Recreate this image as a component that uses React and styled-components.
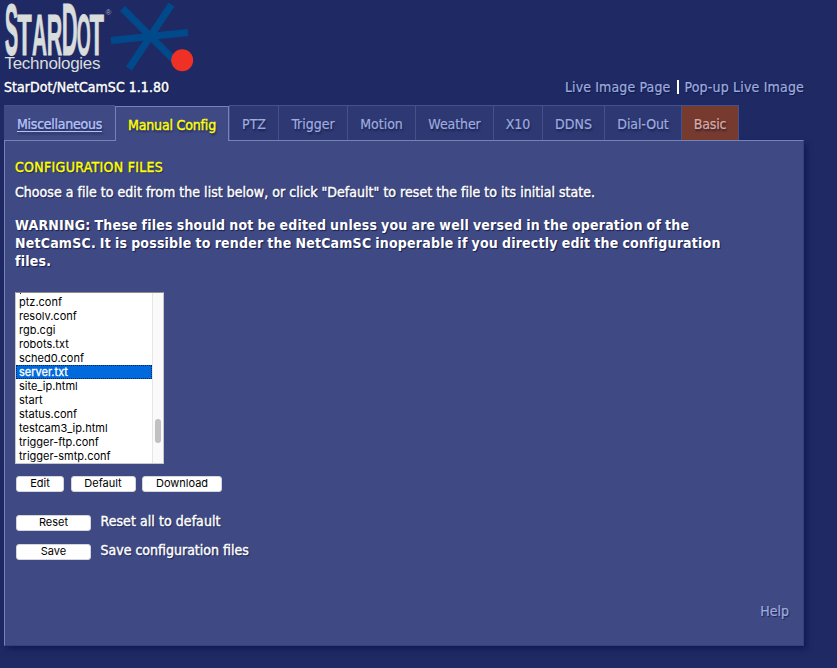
import React from 'react';
import styled, { createGlobalStyle } from 'styled-components';

const Global = createGlobalStyle`
  * { box-sizing: border-box; }
  html, body { margin: 0; background: #1f2a64; }
  body { overflow: hidden; }
`;

const Page = styled.div`
  width: 837px;
  height: 668px;
  padding-left: 4px;
  overflow: hidden;
  background: #1f2a64;
  color: #fff;
  font: 14px/18px "DejaVu Sans Condensed", "DejaVu Sans", sans-serif;
  text-shadow: 1px 1px 1px rgba(10, 16, 60, 0.75);
`;

const Logo = styled.svg`
  display: block;
  width: 200px;
  height: 78px;
  overflow: visible;
  text-shadow: none;
`;

const TitleRow = styled.header`
  display: flex;
  justify-content: space-between;
  width: 800px;
  height: 27px;
`;

const Strong = styled.span`
  white-space: nowrap;
  letter-spacing: ${(p) => p.$spacing || 0}px;
  -webkit-text-stroke: 0.4px #fff;
`;

const Links = styled.nav`
  display: flex;
  gap: 4.5px;
`;

const Link = styled.a`
  color: #9dabdf;
  white-space: nowrap;
  letter-spacing: ${(p) => p.$spacing || 0}px;
  -webkit-text-stroke: 0.2px #9dabdf;
`;

const Divider = styled.span`
  width: 2px;
  height: 14px;
  margin: 2px 1px 0 2px;
  background: #fff;
`;

const Tabs = styled.nav`
  display: flex;
  height: 35px;
`;

const tones = {
  normal: { bg: '#2e3973', color: '#9dabdf', border: '#46518b' },
  hover: { bg: '#3f4a84', color: '#b4c1f5', border: '#46518b' },
  active: { bg: '#3f4a84', color: '#ffff00', border: '#7783b5' },
  basic: { bg: '#763b2e', color: '#dcaaa0', border: '#46518b' },
};

const Tab = styled.a`
  display: flex;
  justify-content: center;
  width: ${(p) => p.$width}px;
  height: 35px;
  margin-top: ${(p) => (p.$tone === 'active' ? 1 : 0)}px;
  padding: 9px 0 0;
  border-top: 1px solid ${(p) => tones[p.$tone].border};
  border-left: ${(p) => (p.$tone === 'hover' ? 0 : 1)}px solid ${(p) => tones[p.$tone].border};
  border-right: ${(p) => (p.$tone === 'active' || p.$tone === 'basic' ? 1 : 0)}px solid ${(p) => tones[p.$tone].border};
  background: ${(p) => tones[p.$tone].bg};
  color: ${(p) => tones[p.$tone].color};
  letter-spacing: ${(p) => p.$spacing || 0}px;
  white-space: nowrap;
  text-shadow: 1px 2px 2px rgba(15, 20, 65, 0.7);
  text-decoration: ${(p) => (p.$tone === 'hover' ? 'underline' : 'none')};
  text-underline-offset: 2px;
  -webkit-text-stroke: ${(p) => (p.$tone === 'active' ? 0.4 : 0.2)}px ${(p) => tones[p.$tone].color};
  z-index: ${(p) => (p.$tone === 'active' ? 1 : 0)};
`;

const Panel = styled.main`
  display: flex;
  flex-direction: column;
  width: 800px;
  height: 506px;
  padding: 17px 10px 0;
  border: 1px solid #35407a;
  border-top-color: #7783b5;
  border-left-color: #7783b5;
  background: #3f4a84;
  box-shadow: 3px 3px 5px #111b54;
`;

const Heading = styled.h1`
  margin: 0;
  color: #ffff00;
  font: inherit;
  letter-spacing: 0.3px;
  -webkit-text-stroke: 0.4px #ffff00;
`;

const Intro = styled.p`
  margin: 7px 0 0;
  display: flex;
`;

const Warning = styled.p`
  margin: 15px 0 0;
  font-weight: bold;
  letter-spacing: 0.2px;
  word-spacing: -0.6px;
  white-space: nowrap;
`;

const ListBox = styled.div`
  display: flex;
  width: 149px;
  height: 172px;
  margin-top: 22px;
  border: 1px solid #c8c8c8;
  border-top-color: #8c8c8c;
  background: #fff;
  overflow: hidden;
  text-shadow: none;
`;

const Options = styled.div`
  flex: 1;
  padding-top: 2px;
  background: linear-gradient(#223, #223) 4px 0 / 1px 1px no-repeat;
`;

const Option = styled.div`
  height: 14px;
  padding-left: 3px;
  outline: ${(p) => (p.$selected ? '1px dotted #00246b' : 'none')};
  outline-offset: -1px;
  background: ${(p) => (p.$selected ? '#0069dc' : 'transparent')};
  color: ${(p) => (p.$selected ? '#fff' : '#000')};
  -webkit-text-stroke: ${(p) => (p.$selected ? 0.3 : 0)}px #fff;
  font: 11px/14px Inter, sans-serif;
`;

const Scrollbar = styled.div`
  display: flex;
  align-items: flex-end;
  justify-content: center;
  width: 11px;
  padding-bottom: 20px;
  border-left: 1px solid #e6e6e6;
  background: #fafafa;
`;

const Thumb = styled.div`
  width: 6px;
  height: 24px;
  border-radius: 3px;
  background: #c1c1c1;
`;

const Buttons = styled.div`
  display: flex;
  gap: ${(p) => p.$gap || 7}px;
  margin: ${(p) => p.$top}px 0 0 1px;
`;

const Button = styled.button`
  width: ${(p) => p.$width}px;
  height: 16px;
  margin-top: ${(p) => p.$drop || 0}px;
  padding: 0 0 2px;
  border: 1px solid #d5d6dc;
  border-radius: 3px;
  background: #fff;
  color: #000;
  font: 11px/12px Inter, sans-serif;
`;

const Footer = styled.footer`
  display: flex;
  justify-content: flex-end;
  margin: 42px 4px 0 0;
`;

const tabs = [
  ['Miscellaneous', 111, 'hover', -0.25],
  ['Manual Config', 114, 'active', -0.17],
  ['PTZ', 49, 'normal'],
  ['Trigger', 69, 'normal'],
  ['Motion', 68, 'normal'],
  ['Weather', 78, 'normal', -0.1],
  ['X10', 49, 'normal'],
  ['DDNS', 62, 'normal'],
  ['Dial-Out', 77, 'normal', -0.1],
  ['Basic', 58, 'basic', -0.2],
];

const files = [
  'ptz.conf', 'resolv.conf', 'rgb.cgi', 'robots.txt', 'sched0.conf', 'server.txt',
  'site_ip.html', 'start', 'status.conf', 'testcam3_ip.html', 'trigger-ftp.conf', 'trigger-smtp.conf',
];

// letter, left edge, font size, advance width
const wordmark = [
  ['S', 4.8, 73, 13.5],
  ['T', 17.2, 58, 14.5],
  ['A', 32, 58, 15],
  ['R', 46.8, 58, 15.5],
  ['D', 61.8, 75, 16],
  ['O', 76.8, 57, 14],
  ['T', 89.5, 58, 14.5],
];

function StarDotLogo() {
  return (
    <Logo viewBox="4 0 200 78">
      <g fill="#d9dddc" stroke="#d9dddc" strokeWidth="0.9" fontFamily="Liberation Sans Narrow, Liberation Sans" fontWeight="700">
        {wordmark.map(([letter, x, size, width]) => (
          <text key={x} x={x} y="54.5" fontSize={size} textLength={width} lengthAdjust="spacingAndGlyphs">{letter}</text>
        ))}
      </g>
      <text x="4.5" y="69" fill="#d9dddc" fontFamily="Liberation Sans" fontSize="17" textLength="96">Technologies</text>
      <text x="105.5" y="15" fill="#9ea5b9" fontFamily="Liberation Sans" fontSize="8">®</text>
      <g stroke="#004a8c" strokeWidth="7">
        <path d="M111 40.5 L188 32.5" />
        <path d="M122.5 8.5 L180 66" />
        <path d="M171.5 4.5 L129 68.5" />
      </g>
      <circle cx="182.2" cy="60.3" r="11" fill="#ef3024" />
    </Logo>
  );
}

export default function App() {
  return (
    <>
      <Global />
      <Page>
        <StarDotLogo />
        <TitleRow>
          <Strong $spacing={0.04}>StarDot/NetCamSC 1.1.80</Strong>
          <Links>
            <Link $spacing={0.13}>Live Image Page</Link>
            <Divider />
            <Link $spacing={0.18}>Pop-up Live Image</Link>
          </Links>
        </TitleRow>
        <Tabs>
          {tabs.map(([label, width, tone, spacing]) => (
            <Tab key={label} $width={width} $tone={tone} $spacing={spacing}>{label}</Tab>
          ))}
        </Tabs>
        <Panel>
          <Heading>CONFIGURATION FILES</Heading>
          <Intro>
            <Strong $spacing={0.03}>
              Choose a file to edit from the list below, or click "Default" to reset the file to its initial state.
            </Strong>
          </Intro>
          <Warning>
            WARNING: These files should not be edited unless you are well versed in the operation of the<br />
            NetCamSC. It is possible to render the NetCamSC inoperable if you directly edit the configuration<br />
            files.
          </Warning>
          <ListBox>
            <Options>
              {files.map((file) => (
                <Option key={file} $selected={file === 'server.txt'}>{file}</Option>
              ))}
            </Options>
            <Scrollbar><Thumb /></Scrollbar>
          </ListBox>
          <Buttons $top={12} $gap={6.5}>
            <Button $width={48}>Edit</Button>
            <Button $width={65}>Default</Button>
            <Button $width={80}>Download</Button>
          </Buttons>
          <Buttons $top={20} $gap={9.5}>
            <Button $width={75} $drop={3}>Reset</Button>
            <Strong $spacing={0.06}>Reset all to default</Strong>
          </Buttons>
          <Buttons $top={10} $gap={9.5}>
            <Button $width={75} $drop={3}>Save</Button>
            <Strong>Save configuration files</Strong>
          </Buttons>
          <Footer><Link>Help</Link></Footer>
        </Panel>
      </Page>
    </>
  );
}
